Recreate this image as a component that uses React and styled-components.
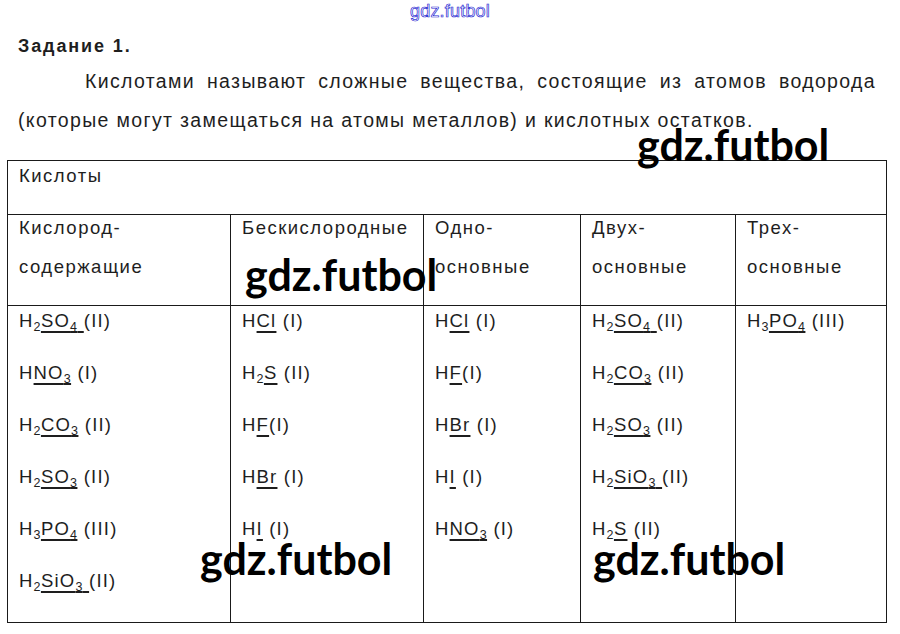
import React from "react";
import styled, { createGlobalStyle } from "styled-components";

const GlobalStyle = createGlobalStyle`
  html, body {
    margin: 0;
    padding: 0;
    background: #fff;
  }
  body {
    font-family: "Liberation Sans", Arial, sans-serif;
    color: #1e1e1e;
  }
`;

const Page = styled.div`
  position: relative;
  width: 900px;
  height: 634px;
  overflow: hidden;
`;

const TopMark = styled.div`
  height: 22px;
  line-height: 22px;
  font-size: 18px;
  letter-spacing: 0.2px;
  text-align: center;
  color: #fff;
  -webkit-text-stroke: 0.7px #1f1fd2;
`;

const Heading = styled.h2`
  margin: 12px 0 0 18px;
  font-size: 18px;
  line-height: 24px;
  font-weight: 700;
  letter-spacing: 1.9px;
`;

const Text = styled.p`
  margin: 4px 24px 0 18px;
  font-size: 19.5px;
  line-height: 39px;
  letter-spacing: 1.35px;
  text-indent: 67px;
  text-align: justify;
`;

const Table = styled.table`
  margin: 20px 0 0 7px;
  width: 879px;
  border-collapse: collapse;
  table-layout: fixed;
`;

const Cell = styled.td`
  border: 1px solid #1a1a1a;
  padding: 0 0 0 11px;
  vertical-align: top;
  font-size: 18.5px;
  letter-spacing: 1.5px;
  height: ${(p) => p.$h}px;
  box-sizing: border-box;
`;

const Title = styled.div`
  line-height: 30px;
`;

const HeadLine = styled.div`
  line-height: 26px;
  margin-bottom: 13px;
`;

const FormulaLine = styled.div`
  height: 30px;
  line-height: 30px;
  margin-bottom: 22px;
  white-space: pre;
  letter-spacing: 1.2px;
`;

const Sub = styled.span`
  font-size: 12.5px;
  line-height: 1;
  vertical-align: -4px;
  letter-spacing: 0.4px;
`;

const Residue = styled.span`
  text-decoration: underline;
  text-decoration-thickness: 1.5px;
  text-underline-offset: 4px;
`;

const Mark = styled.div`
  position: absolute;
  left: ${(p) => p.$x}px;
  top: ${(p) => p.$y}px;
  font-family: Lato, "Open Sans", sans-serif;
  font-weight: 700;
  font-size: 43px;
  line-height: 43px;
  color: #000;
  pointer-events: none;
`;

// "H_2[SO_4 ](II)": _ makes the next digit a subscript, [ ] underlines the acid residue
function parts(str) {
  const out = [];
  let i = 0;
  let key = 0;
  while (i < str.length) {
    const c = str[i];
    if (c === "_") {
      out.push(<Sub key={key++}>{str[i + 1]}</Sub>);
      i += 2;
    } else if (c === "[") {
      const end = str.indexOf("]", i);
      out.push(<Residue key={key++}>{parts(str.slice(i + 1, end))}</Residue>);
      i = end + 1;
    } else {
      let j = i;
      while (j < str.length && !"_[".includes(str[j])) j++;
      out.push(str.slice(i, j));
      i = j;
    }
  }
  return out;
}

const columns = [
  ["H_2[SO_4 ](II)", "H[NO_3] (I)", "H_2[CO_3] (II)", "H_2[SO_3] (II)", "H_3[PO_4] (III)", "H_2[SiO_3 ](II)"],
  ["H[Cl] (I)", "H_2[S] (II)", "H[F](I)", "H[Br] (I)", "H[I] (I)"],
  ["H[Cl] (I)", "H[F](I)", "H[Br] (I)", "H[I] (I)", "H[NO_3] (I)"],
  ["H_2[SO_4 ](II)", "H_2[CO_3] (II)", "H_2[SO_3] (II)", "H_2[SiO_3 ](II)", "H_2[S] (II)"],
  ["H_3[PO_4] (III)"],
];

const heads = [
  ["Кислород-", "содержащие"],
  ["Бескислородные"],
  ["Одно-", "основные"],
  ["Двух-", "основные"],
  ["Трех-", "основные"],
];

const widths = [223, 193, 157, 155, 151];

export default function App() {
  return (
    <Page>
      <GlobalStyle />
      <TopMark>gdz.futbol</TopMark>
      <Heading>Задание 1.</Heading>
      <Text>
        Кислотами называют сложные вещества, состоящие из атомов водорода
        (которые могут замещаться на атомы металлов) и кислотных остатков.
      </Text>
      <Table>
        <colgroup>
          {widths.map((w, i) => (
            <col key={i} style={{ width: w }} />
          ))}
        </colgroup>
        <tbody>
          <tr>
            <Cell colSpan={5} $h={54}>
              <Title>Кислоты</Title>
            </Cell>
          </tr>
          <tr>
            {heads.map((lines, i) => (
              <Cell key={i} $h={91}>
                {lines.map((l) => (
                  <HeadLine key={l}>{l}</HeadLine>
                ))}
              </Cell>
            ))}
          </tr>
          <tr>
            {columns.map((col, i) => (
              <Cell key={i} $h={317}>
                {col.map((f, j) => (
                  <FormulaLine key={j}>{parts(f)}</FormulaLine>
                ))}
              </Cell>
            ))}
          </tr>
        </tbody>
      </Table>
      <Mark $x={637} $y={123}>gdz.futbol</Mark>
      <Mark $x={245} $y={253}>gdz.futbol</Mark>
      <Mark $x={200} $y={537}>gdz.futbol</Mark>
      <Mark $x={593} $y={537}>gdz.futbol</Mark>
    </Page>
  );
}
